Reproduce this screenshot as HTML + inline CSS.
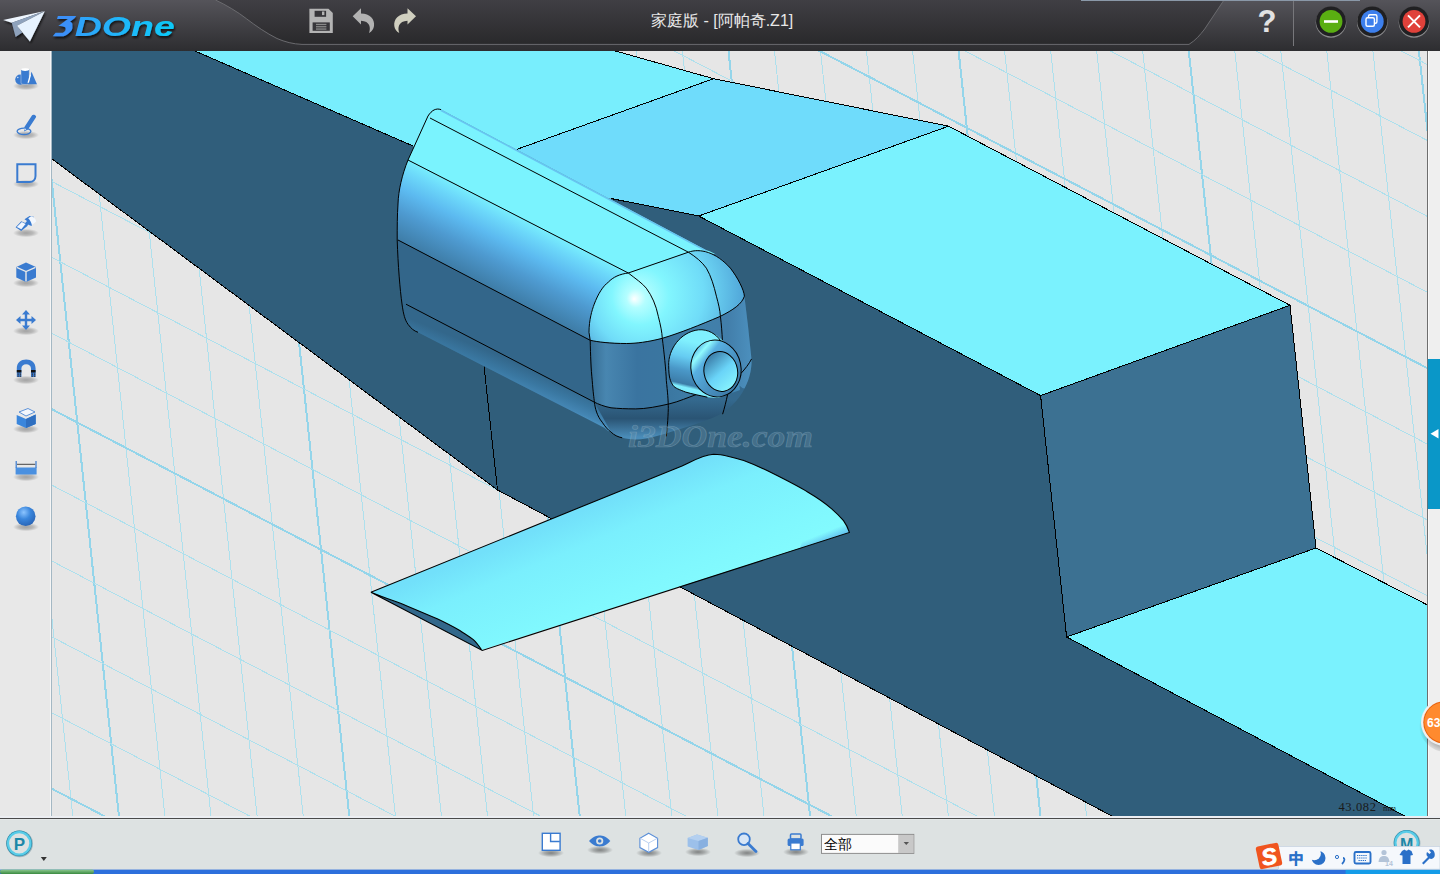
<!DOCTYPE html>
<html><head><meta charset="utf-8">
<style>
*{margin:0;padding:0;box-sizing:border-box}
html,body{width:1440px;height:874px;overflow:hidden;background:#e6e6e6;font-family:"Liberation Sans",sans-serif}
#scene{position:absolute;left:0;top:0;width:1440px;height:874px}
#title{position:absolute;left:0;top:0;width:1440px;height:51px}
#left{position:absolute;left:0;top:51px;width:52px;height:767px;background:#e8e8e8;border-right:1px solid #a4b8c4;box-shadow:inset -1px 0 0 #f6f6f6}
#rightstrip{position:absolute;left:1427px;top:51px;width:13px;height:766px;background:#efefef;border-left:1px solid #6e6e6e;box-shadow:inset 1px 0 0 #fafafa}
#bottom{position:absolute;left:0;top:816px;width:1440px;height:54px;background:#dde2e2;border-top:2px solid #eceef2}
#taskbar{position:absolute;left:0;top:870px;width:1440px;height:4px;background:#2f6fd8}
.ttl{position:absolute;left:651px;top:11px;font-size:16px;color:#e8e8e8;letter-spacing:0px}
</style></head><body>
<svg id="scene" width="1440" height="874" viewBox="0 0 1440 874">
  <rect x="52" y="51" width="1375" height="765" fill="#e6e6e6"/>
  <g id="grid" fill="none" shape-rendering="crispEdges"><line x1="-54.1" y1="51" x2="26.8" y2="817" stroke="#ade0ed" stroke-width="1"/><line x1="-8.0" y1="51" x2="72.9" y2="817" stroke="#ade0ed" stroke-width="1"/><line x1="38.0" y1="51" x2="119.0" y2="817" stroke="#94d5ea" stroke-width="2"/><line x1="84.0" y1="51" x2="165.0" y2="817" stroke="#ade0ed" stroke-width="1"/><line x1="130.1" y1="51" x2="211.1" y2="817" stroke="#ade0ed" stroke-width="1"/><line x1="176.1" y1="51" x2="257.2" y2="817" stroke="#ade0ed" stroke-width="1"/><line x1="222.1" y1="51" x2="303.3" y2="817" stroke="#ade0ed" stroke-width="1"/><line x1="268.1" y1="51" x2="349.4" y2="817" stroke="#94d5ea" stroke-width="2"/><line x1="314.2" y1="51" x2="395.5" y2="817" stroke="#ade0ed" stroke-width="1"/><line x1="360.2" y1="51" x2="441.5" y2="817" stroke="#ade0ed" stroke-width="1"/><line x1="406.2" y1="51" x2="487.6" y2="817" stroke="#ade0ed" stroke-width="1"/><line x1="452.3" y1="51" x2="533.7" y2="817" stroke="#ade0ed" stroke-width="1"/><line x1="498.3" y1="51" x2="579.8" y2="817" stroke="#94d5ea" stroke-width="2"/><line x1="544.3" y1="51" x2="625.9" y2="817" stroke="#ade0ed" stroke-width="1"/><line x1="590.4" y1="51" x2="671.9" y2="817" stroke="#ade0ed" stroke-width="1"/><line x1="636.4" y1="51" x2="718.0" y2="817" stroke="#ade0ed" stroke-width="1"/><line x1="682.4" y1="51" x2="764.1" y2="817" stroke="#ade0ed" stroke-width="1"/><line x1="728.5" y1="51" x2="810.2" y2="817" stroke="#94d5ea" stroke-width="2"/><line x1="774.5" y1="51" x2="856.3" y2="817" stroke="#ade0ed" stroke-width="1"/><line x1="820.5" y1="51" x2="902.3" y2="817" stroke="#ade0ed" stroke-width="1"/><line x1="866.5" y1="51" x2="948.4" y2="817" stroke="#ade0ed" stroke-width="1"/><line x1="912.6" y1="51" x2="994.5" y2="817" stroke="#ade0ed" stroke-width="1"/><line x1="958.6" y1="51" x2="1040.6" y2="817" stroke="#94d5ea" stroke-width="2"/><line x1="1004.6" y1="51" x2="1086.7" y2="817" stroke="#ade0ed" stroke-width="1"/><line x1="1050.7" y1="51" x2="1132.7" y2="817" stroke="#ade0ed" stroke-width="1"/><line x1="1096.7" y1="51" x2="1178.8" y2="817" stroke="#ade0ed" stroke-width="1"/><line x1="1142.7" y1="51" x2="1224.9" y2="817" stroke="#ade0ed" stroke-width="1"/><line x1="1188.8" y1="51" x2="1271.0" y2="817" stroke="#94d5ea" stroke-width="2"/><line x1="1234.8" y1="51" x2="1317.1" y2="817" stroke="#ade0ed" stroke-width="1"/><line x1="1280.8" y1="51" x2="1363.2" y2="817" stroke="#ade0ed" stroke-width="1"/><line x1="1326.8" y1="51" x2="1409.2" y2="817" stroke="#ade0ed" stroke-width="1"/><line x1="1372.9" y1="51" x2="1455.3" y2="817" stroke="#ade0ed" stroke-width="1"/><line x1="1418.9" y1="51" x2="1501.4" y2="817" stroke="#94d5ea" stroke-width="2"/><line x1="1464.9" y1="51" x2="1547.5" y2="817" stroke="#ade0ed" stroke-width="1"/><line x1="52" y1="-729.2" x2="1427" y2="-11.5" stroke="#94d5ea" stroke-width="2"/><line x1="52" y1="-653.3" x2="1427" y2="64.4" stroke="#ade0ed" stroke-width="1"/><line x1="52" y1="-577.4" x2="1427" y2="140.3" stroke="#ade0ed" stroke-width="1"/><line x1="52" y1="-501.5" x2="1427" y2="216.2" stroke="#ade0ed" stroke-width="1"/><line x1="52" y1="-425.6" x2="1427" y2="292.1" stroke="#ade0ed" stroke-width="1"/><line x1="52" y1="-349.7" x2="1427" y2="368.0" stroke="#94d5ea" stroke-width="2"/><line x1="52" y1="-273.8" x2="1427" y2="443.9" stroke="#ade0ed" stroke-width="1"/><line x1="52" y1="-197.9" x2="1427" y2="519.8" stroke="#ade0ed" stroke-width="1"/><line x1="52" y1="-122.0" x2="1427" y2="595.7" stroke="#ade0ed" stroke-width="1"/><line x1="52" y1="-46.1" x2="1427" y2="671.6" stroke="#ade0ed" stroke-width="1"/><line x1="52" y1="29.8" x2="1427" y2="747.5" stroke="#94d5ea" stroke-width="2"/><line x1="52" y1="105.7" x2="1427" y2="823.4" stroke="#ade0ed" stroke-width="1"/><line x1="52" y1="181.6" x2="1427" y2="899.3" stroke="#ade0ed" stroke-width="1"/><line x1="52" y1="257.5" x2="1427" y2="975.2" stroke="#ade0ed" stroke-width="1"/><line x1="52" y1="333.4" x2="1427" y2="1051.1" stroke="#ade0ed" stroke-width="1"/><line x1="52" y1="409.3" x2="1427" y2="1127.0" stroke="#94d5ea" stroke-width="2"/><line x1="52" y1="485.2" x2="1427" y2="1202.9" stroke="#ade0ed" stroke-width="1"/><line x1="52" y1="561.1" x2="1427" y2="1278.8" stroke="#ade0ed" stroke-width="1"/><line x1="52" y1="637.0" x2="1427" y2="1354.8" stroke="#ade0ed" stroke-width="1"/><line x1="52" y1="712.9" x2="1427" y2="1430.7" stroke="#ade0ed" stroke-width="1"/><line x1="52" y1="788.8" x2="1427" y2="1506.5" stroke="#94d5ea" stroke-width="2"/><line x1="52" y1="864.7" x2="1427" y2="1582.4" stroke="#ade0ed" stroke-width="1"/></g>
  <!-- dark side face -->
  <polygon fill="#305e7b" points="52,51 195,51 413,146 470,175 611,198.5 698.7,216 1040.6,395.6 1066.6,637 1406.7,817 1113.7,817 497.5,490 52,159"/>
  <!-- top face left -->
  <polygon fill="#78eefd" points="195,51 615.5,51 713.6,78.7 516.7,149.4 460,175 413,146"/>
  <!-- ramp -->
  <polygon fill="#6fdcfb" points="516.7,149.4 713.6,78.7 948.6,126.2 698.7,216 611,198.5 470,175"/>
  <!-- raised top -->
  <polygon fill="#7af2fe" points="698.7,216 948.6,126.2 1290,305.3 1040.6,395.6"/>
  <!-- front face -->
  <polygon fill="#3c7192" points="1040.6,395.6 1290,305.3 1316,548 1066.6,637"/>
  <!-- lower top -->
  <polygon fill="#7af2fe" points="1066.6,637 1316,548 1427.5,605 1427.5,817 1406.7,817"/>
  <g stroke="#000" stroke-width="1" fill="none" shape-rendering="crispEdges">
    <polyline points="195,51 413,146"/>
    <polyline points="615.5,51 713.6,78.7 948.6,126.2 1290,305.3 1316,548 1427.5,605"/>
    <polyline points="516.7,149.4 713.6,78.7"/>
    <polyline points="698.7,216 948.6,126.2"/>
    <polyline points="611,198.5 698.7,216 1040.6,395.6 1290,305.3"/>
    <polyline points="1040.6,395.6 1066.6,637 1316,548"/>
    <polyline points="1066.6,637 1406.7,817"/>
    <polyline points="52,159 497.5,490 1113.7,817"/>
    <polyline points="484,366 497.5,490"/>
  </g>
  <!-- wing -->
  <g id="wing">
    <defs>
      <linearGradient id="wg" gradientUnits="userSpaceOnUse" x1="560" y1="520" x2="610" y2="640">
        <stop offset="0" stop-color="#72e0fa"/><stop offset="0.25" stop-color="#7aeffd"/><stop offset="0.7" stop-color="#80f8fe"/><stop offset="1" stop-color="#84fcfe"/>
      </linearGradient>
      <linearGradient id="wtip" gradientUnits="userSpaceOnUse" x1="835" y1="528" x2="842" y2="545">
        <stop offset="0" stop-color="#56acec" stop-opacity="0"/><stop offset="0.65" stop-color="#56acec" stop-opacity="0.95"/><stop offset="1" stop-color="#56acec" stop-opacity="0"/>
      </linearGradient>
    </defs>
    <path fill="url(#wg)" d="M370.9,592.2 L682,465.9 C692,461.5 702,455 713.6,454.2 L720.7,454.7 C728,456 735,458 743.1,460.3 C753,464 763,468.5 772.6,473.3 C785,479.5 797,485.5 808,492.2 C817,497.5 825,503 831.7,508.8 C836,512.5 840,516.5 843.5,520.6 C846,524 848,528 849.4,532.4 L481.8,650 Z"/>
    <path fill="url(#wtip)" d="M849.4,532.4 L800,548 L805,533 L843.5,520.6 Z"/>
    <path fill="#33688b" d="M370.9,592.2 C380,596 390,599.5 401.1,603.5 C413,608.5 425,613.5 437.2,618.8 C445,622.5 452,626 459.8,630.5 C465,634 469,636.5 473.3,639.6 C476.5,642.5 479,646 481.4,649.5 L482.3,650.4 Z"/>
    <path fill="none" stroke="#000" stroke-width="1.1" d="M370.9,592.2 L682,465.9 C692,461.5 702,455 713.6,454.2 L720.7,454.7 C728,456 735,458 743.1,460.3 C753,464 763,468.5 772.6,473.3 C785,479.5 797,485.5 808,492.2 C817,497.5 825,503 831.7,508.8 C836,512.5 840,516.5 843.5,520.6 C846,524 848,528 849.4,532.4 L482.3,650.4 L370.9,592.2 C380,596 390,599.5 401.1,603.5 C413,608.5 425,613.5 437.2,618.8 C445,622.5 452,626 459.8,630.5 C465,634 469,636.5 473.3,639.6 C476.5,642.5 479,646 481.4,649.5"/>
  </g>
  <!-- nacelle -->
  <g id="nacelle">
    <defs>
      <clipPath id="nclip"><path id="nsil" d="M438,108.8 C433,109 430,112 428,116 L408,160 C402,175 398.5,190 398,204 C397.2,215 397.2,228 397.2,240 C398,265 400,290 402,304 C403.5,315 405,320 408,324.3 C411,328.5 414,331 418,332.3 L604.4,427.8 C608,431 615,436 622.2,437.8 C630,439.8 638,440 646.3,438.5 C665,434 680,429 694.4,424.4 C708,420 718,416 726.4,410.4 C734,404 739,398 742.4,392.4 C748.5,382 751.6,372 751.6,360.3 L748,326 L744.4,296.2 C744,292 743.5,290 742.4,288.2 C738,280 735,274 730.4,268.2 C722,258 716,253 706.4,250.2 L441,109.6 Z"/></clipPath>
      <linearGradient id="nb3" gradientUnits="userSpaceOnUse" x1="500" y1="207" x2="465" y2="275">
        <stop offset="0" stop-color="#78eefd"/><stop offset="0.15" stop-color="#6cd8fa"/><stop offset="0.38" stop-color="#5cbaf0"/><stop offset="0.65" stop-color="#4e9ad0"/><stop offset="1" stop-color="#3e7ca6"/>
      </linearGradient>
      <linearGradient id="nb5" gradientUnits="userSpaceOnUse" x1="500" y1="356" x2="490" y2="380">
        <stop offset="0" stop-color="#33678b"/><stop offset="0.5" stop-color="#3a78a2"/><stop offset="0.85" stop-color="#4486b4"/><stop offset="1" stop-color="#4c94c2"/>
      </linearGradient>
      <linearGradient id="nb1" gradientUnits="userSpaceOnUse" x1="560" y1="171" x2="556" y2="180">
        <stop offset="0" stop-color="#62b8ec"/><stop offset="1" stop-color="#7af3fe"/>
      </linearGradient>
      <radialGradient id="nhl" gradientUnits="userSpaceOnUse" cx="655" cy="290" r="95" fx="634" fy="299">
        <stop offset="0" stop-color="#ffffff"/><stop offset="0.1" stop-color="#b4feff"/><stop offset="0.3" stop-color="#82f6fe"/><stop offset="0.6" stop-color="#70dcf8"/><stop offset="1" stop-color="#4c9ed4"/>
      </radialGradient>
      <radialGradient id="nhl2" gradientUnits="userSpaceOnUse" cx="700" cy="285" r="60">
        <stop offset="0" stop-color="#84f6fe"/><stop offset="0.6" stop-color="#70dcf8"/><stop offset="1" stop-color="#56acdc"/>
      </radialGradient>
      <linearGradient id="nfront" gradientUnits="userSpaceOnUse" x1="588" y1="0" x2="752" y2="0">
        <stop offset="0" stop-color="#34698e"/><stop offset="0.11" stop-color="#4886b0"/><stop offset="0.3" stop-color="#3a74a0"/><stop offset="0.47" stop-color="#3a76a0"/><stop offset="0.7" stop-color="#4080aa"/><stop offset="0.85" stop-color="#427eaa"/><stop offset="1" stop-color="#4c90be"/>
      </linearGradient>
      <linearGradient id="nbot" gradientUnits="userSpaceOnUse" x1="0" y1="400" x2="0" y2="437">
        <stop offset="0" stop-color="#34698e"/><stop offset="0.5" stop-color="#2a5474"/><stop offset="1" stop-color="#4a8cb8"/>
      </linearGradient>
      <linearGradient id="ncyl" gradientUnits="userSpaceOnUse" x1="684" y1="340" x2="672" y2="392">
        <stop offset="0" stop-color="#80f0fe"/><stop offset="0.3" stop-color="#66ccf2"/><stop offset="0.55" stop-color="#4a98c8"/><stop offset="0.8" stop-color="#3c7ca8"/><stop offset="0.86" stop-color="#80eefe"/><stop offset="1" stop-color="#7ae8fc"/>
      </linearGradient>
      <linearGradient id="nring" gradientUnits="userSpaceOnUse" x1="698" y1="346" x2="736" y2="394">
        <stop offset="0" stop-color="#5ab4e6"/><stop offset="0.12" stop-color="#90fafe"/><stop offset="0.25" stop-color="#58b0e2"/><stop offset="0.6" stop-color="#4890c0"/><stop offset="1" stop-color="#3a74a0"/>
      </linearGradient>
      <linearGradient id="nhole" gradientUnits="userSpaceOnUse" x1="710" y1="355" x2="732" y2="390">
        <stop offset="0" stop-color="#3a7aa6"/><stop offset="0.5" stop-color="#6ad4f8"/><stop offset="1" stop-color="#8af6fe"/>
      </linearGradient>
    </defs>
    <g clip-path="url(#nclip)">
      <rect x="390" y="100" width="370" height="350" fill="url(#nbot)"/>
      <polygon fill="#7af3fe" points="380,40 800,260 688.4,252.2 628.3,273 408,160 380,145"/>
      <path d="M441,109.6 L706.4,250.2" stroke="#62b4ec" stroke-width="3" stroke-opacity="0.75" fill="none"/>
      <polygon fill="url(#nb3)" points="408,160 628.3,273 590.2,340.3 398,240 370,225 370,140"/>
      <polygon fill="#33668a" points="398,240 590.2,340.3 594.4,402.2 406,304.2 370,290 370,225"/>
      <polygon fill="url(#nb5)" points="406,304.2 594.4,402.2 611.1,432.2 612,450 370,345 370,290"/>
      <path fill="url(#nfront)" d="M590.2,340.3 C598,342 610,343.5 626.3,343.5 C636,343.5 648,342 662.3,338.3 C680,333 700,325 720.4,316.3 C733,310 742,304 744.4,296.2 L760,296 L760,392 L742.4,388 C738,384 734,383 730.4,382.3 C720,386 708,391 696.3,394.5 C688,397.5 679,401.5 670,403.7 C658,406.5 646,408.9 635.8,408.9 C626,408.9 618,408.5 611,407.8 C604,406.5 598,404 594.4,402.2 Z"/>
      <path fill="url(#nhl)" d="M628.3,273 L688.4,252.2 C700,248 716,252 730.4,268.2 C738,278 744,290 744.4,296.2 C742,304 733,310 720.4,316.3 C700,325 680,333 662.3,338.3 C648,342 636,343.5 626.3,343.5 C610,343 598,342 590.2,340.3 L589,332.3 C589,318 592,308 594.2,304.2 C598,294 603,286 608.3,282.2 C615,277 622,274 628.3,273 Z"/>
    </g>
    <g fill="none" stroke="#000" stroke-width="1">
      <path d="M441,109.6 C436,108 432,110 428,116 L408,160 C402,175 398.5,190 398,204 C397.2,215 397.2,228 397.2,240 C398,265 400,290 402,304 C403.5,315 405,320 408,324.3 C411,328.5 414,331 418,332.3"/>
      <path d="M430,118 L688.4,252.2"/>
      <path d="M408,160 L628.3,273"/>
      <path d="M398,240 L590.2,340.3"/>
      <path d="M406,304.2 L594.4,402.2"/>
      <path d="M628.3,273 L688.4,252.2"/>
      <path d="M688.4,252.2 C700,248 716,252 730.4,268.2 C738,278 744,290 744.4,296.2"/>
      <path d="M590.2,340.3 C598,342 610,343.5 626.3,343.5 C636,343.5 648,342 662.3,338.3 C680,333 700,325 720.4,316.3 C733,310 742,304 744.4,296.2"/>
      <path d="M594.4,402.2 C598,404 604,406.5 611,407.8 C618,408.5 626,408.9 635.8,408.9 C646,408.9 658,406.5 670,403.7 C679,401.5 688,397.5 696.3,394.5 C708,391 720,386 727.9,382.6 C733,380 737,377 741,373.4 C745,369 749,364 751.6,358.9"/>
      <path d="M628.3,273 C620,274 613,277 608.3,282.2 C603,286 598,294 594.2,304.2 C592,310 589,320 589,332.3 L590.2,340.3 C590.5,355 591,370 592.2,380.3 C593,392 594,398 594.4,402.2 C595,408 597,416 602.2,422.2 C605,426.5 608,430 611.1,432.2 C614,435 618,437 622.2,437.8"/>
      <path d="M628.3,273 C636,279 642,283 646.3,288.2 C652,296 656,305 658.3,316.3 C660.5,325 662,332 662.3,338.3 C664,352 666,370 666.3,380.3 C667.5,392 668.3,400 668.3,408.4 C668,420 667,430 666.3,436.4"/>
      <path d="M688.4,252.2 C696,257 702,262 706.4,268.2 C711,276 714,286 716.4,296.2 C718.5,304 720,310 720.4,316.3 C721.5,325 722,333 722.4,340.3"/>
      <path d="M727.9,393.2 C726,402 724.5,408 722.6,414.2"/>
    </g>
    <!-- nozzle -->
    <path fill="url(#ncyl)" d="M668.7,365.5 C668,350 680,332 698.5,329.8 C708,329 716,334 722,340 L735,352 L740,390 L718,398 L707.4,397.2 C700,395.5 692,394 685.7,392.1 C679,389.5 675,388 673.4,385.9 C670,381 668.8,377.7 668.7,365.5 Z"/>
    <ellipse cx="716" cy="368.5" rx="25" ry="28.5" transform="rotate(-12 716 368.5)" fill="url(#nring)"/>
    <ellipse cx="720.8" cy="371.5" rx="16.8" ry="20" transform="rotate(-10 720.8 371.5)" fill="url(#nhole)"/>
    <g fill="none" stroke="#000" stroke-width="1">
      <path d="M707.4,397.2 C700,395.5 692,394 685.7,392.1 C679,389.5 675,388 673.4,385.9 C670,381 668.8,377.7 668.7,365.5 C668,350 680,332 698.5,329.8 C708,329 716,334 720.5,340.5"/>
      <ellipse cx="716" cy="368.5" rx="25" ry="28.5" transform="rotate(-12 716 368.5)"/>
      <ellipse cx="720.8" cy="371.5" rx="16.8" ry="20" transform="rotate(-10 720.8 371.5)"/>
    </g>
  </g>
  <text x="628" y="446.5" font-family="Liberation Serif" font-weight="bold" font-style="italic" font-size="31" textLength="185" lengthAdjust="spacingAndGlyphs" fill="#7096ae" fill-opacity="0.32" stroke="#a0c0d4" stroke-opacity="0.35" stroke-width="0.7">i3DOne.com</text>
  <text x="1338.4" y="811" font-family="Liberation Serif" font-size="12.5" fill="#1a1a1a" textLength="37.5" lengthAdjust="spacing">43.082</text><text x="1383" y="811" font-family="Liberation Serif" font-size="9" fill="#1a1a1a" textLength="13" lengthAdjust="spacingAndGlyphs">mm</text>
</svg>

<div id="left"></div>
<svg style="position:absolute;left:0;top:51px" width="52" height="520" viewBox="0 51 52 520">
  <defs>
    <radialGradient id="shd" cx="0.5" cy="0.5" r="0.5"><stop offset="0" stop-color="#000" stop-opacity="0.3"/><stop offset="0.55" stop-color="#000" stop-opacity="0.2"/><stop offset="1" stop-color="#000" stop-opacity="0"/></radialGradient>
    <radialGradient id="sph" cx="0.4" cy="0.3" r="0.7"><stop offset="0" stop-color="#8cc4ff"/><stop offset="0.5" stop-color="#3a86dc"/><stop offset="1" stop-color="#2a66b8"/></radialGradient>
  </defs>
  <g fill="url(#shd)">
    <ellipse cx="26" cy="86" rx="13" ry="4.2"/>
    <ellipse cx="26" cy="135" rx="13" ry="4.2"/>
    <ellipse cx="26" cy="184" rx="13" ry="4.2"/>
    <ellipse cx="26" cy="233" rx="13" ry="4.2"/>
    <ellipse cx="26" cy="283" rx="13" ry="4.2"/>
    <ellipse cx="26" cy="331" rx="13" ry="4.2"/>
    <ellipse cx="26" cy="380" rx="13" ry="4.2"/>
    <ellipse cx="26" cy="429" rx="13" ry="4.2"/>
    <ellipse cx="26" cy="477" rx="13" ry="4.2"/>
    <ellipse cx="26" cy="527" rx="13" ry="4.2"/>
  </g>
  <g fill="#3a7bd0">
    <!-- primitives -->
    <circle cx="20.3" cy="79.6" r="5.1"/>
    <circle cx="17.8" cy="77.5" r="0.7" fill="#fff" opacity="0.8"/>
    <path d="M21,69.5 H29.3 V83 C29.3,84 27,84.5 25.15,84.5 C23.3,84.5 21,84 21,83 Z" stroke="#e8e8e8" stroke-width="0.4"/>
    <ellipse cx="25.15" cy="69.6" rx="4" ry="1.3" fill="#ffffff"/>
    <polygon points="31.5,71.8 37,84.2 28,84.2"/>
    <path d="M30.2,73.5 L27.5,82.8 L28.9,82.8 L30.9,75.5 Z" fill="#fff"/>
    <!-- sketch -->
    <ellipse cx="24" cy="131.3" rx="6.9" ry="3.2" fill="none" stroke="#3a7bd0" stroke-width="1.3"/>
    <path d="M24,131.5 L24.4,127 L32.1,115.3 C33,114.3 35,114.8 35.9,116 C36.3,116.6 36.1,117.2 35.7,117.7 L28,129.4 Z"/>
    <path d="M24.3,130.6 L24.6,128.2 L26.4,129.2 Z" fill="#e8f0fa"/>
    <!-- fillet square -->
    <path d="M17.3,164.3 H35.5 V176 C35.5,179.5 33,182 29.5,182 H17.3 Z" fill="none" stroke="#3a7bd0" stroke-width="2"/>
    <!-- eraser-ish -->
    <path d="M15.6,227.3 L21.3,221.2 L25.2,223 L27,221 L24.5,219.3 L29.5,216 L33.8,216.8 L31.6,226 C30,225.5 29,225 28,224.5 L27.4,226 L21.2,231 Z" fill="#3a7bd0"/>
    <path d="M16.8,227 L21.8,221.9 L25.6,223.9 L21.3,229.3 Z" fill="#f2f7fe"/>
    <path d="M28.2,218.3 L31.2,216.3 C33.6,216.8 35.6,218.6 36.2,221.6 L31.9,225 C31,222 29.8,219.8 28.2,218.3 Z" fill="#f2f7fe"/>
    <!-- cube -->
    <polygon points="26,262.5 36,267 36,277.5 26,282 16.3,277.5 16.3,267"/>
    <path d="M16.8,267.4 L26,271.6 L35.5,267.4 M26,271.6 V281.5" stroke="#e8e8e8" stroke-width="1.4" fill="none"/>
    <!-- move -->
    <path d="M26,310 L30,314.5 H27.2 V318.8 H31.5 V316 L36,320 L31.5,324 V321.2 H27.2 V325.5 H30 L26,330 L22,325.5 H24.8 V321.2 H20.5 V324 L16,320 L20.5,316 V318.8 H24.8 V314.5 H22 Z"/>
    <!-- magnet -->
    <path d="M16.8,377 V368.5 C16.8,362.5 21,359.5 26.2,359.5 C31.4,359.5 35.6,362.5 35.6,368.5 V377 H31 V368.5 C31,366 29,364.3 26.2,364.3 C23.4,364.3 21.4,366 21.4,368.5 V377 Z"/>
    <rect x="16.8" y="370" width="4.6" height="2.5" fill="#111"/>
    <rect x="31" y="370" width="4.6" height="2.5" fill="#111"/>
    <path d="M17.5,373.5 h1.3 v1.2 h-1.3z M19.8,373.5 h1.3 v1.2 h-1.3z M17.5,375.6 h1.3 v1.2 h-1.3z M19.8,375.6 h1.3 v1.2 h-1.3z M31.7,373.5 h1.3 v1.2 h-1.3z M34,373.5 h1.3 v1.2 h-1.3z M31.7,375.6 h1.3 v1.2 h-1.3z M34,375.6 h1.3 v1.2 h-1.3z" fill="#333"/>
    <!-- box with lid -->
    <polygon points="16.7,415 26,419 35.7,414.5 35.7,424 26,428 16.7,424" fill="#3a86dc"/>
    <polygon points="26,419 35.7,414.5 35.7,424 26,428" fill="#2f6fc0"/>
    <polygon points="19,412 28,408.5 35,412 26,416" fill="#f2f6fc" stroke="#3a7bd0" stroke-width="0.8"/>
    <!-- ruler -->
    <rect x="15.6" y="467.5" width="21" height="7" fill="#4a90e0"/>
    <rect x="15.6" y="461" width="1.2" height="7"/>
    <rect x="35.4" y="461" width="1.2" height="7"/>
    <path d="M17,464.3 H35.2" stroke="#333" stroke-width="0.9"/>
    <!-- sphere -->
    <circle cx="25.7" cy="516.3" r="9.8" fill="url(#sph)"/>
  </g>
</svg>
<div id="rightstrip"></div>
<div id="bottom"></div>
<div id="taskbar"></div>
<svg style="position:absolute;left:0;top:816px" width="1440" height="58" viewBox="0 816 1440 58">
  <defs>
    <radialGradient id="shd2" cx="0.5" cy="0.5" r="0.5"><stop offset="0" stop-color="#000" stop-opacity="0.42"/><stop offset="0.5" stop-color="#000" stop-opacity="0.25"/><stop offset="1" stop-color="#000" stop-opacity="0"/></radialGradient>
    <linearGradient id="tbg" x1="0" y1="0" x2="0" y2="1"><stop offset="0" stop-color="#8cc890"/><stop offset="1" stop-color="#3a8a40"/></linearGradient>
  </defs>
  <rect x="0" y="816" width="1440" height="2" fill="#eceef2"/><rect x="0" y="818" width="1440" height="1" fill="#4a4a4a"/><rect x="0" y="819" width="1440" height="1" fill="#e4e8e8"/>
  <!-- P button -->
  <circle cx="19.6" cy="843.8" r="13.4" fill="#7a9aa6" opacity="0.6"/>
  <circle cx="19.2" cy="843.3" r="12.9" fill="#2a8aa8"/>
  <circle cx="19.2" cy="843.3" r="11.2" fill="#dde2e2" stroke="#58cce8" stroke-width="2.2"/>
  <text x="19.3" y="850" text-anchor="middle" font-family="Liberation Sans" font-weight="bold" font-size="17" fill="#1c88a8">P</text>
  <polygon points="40.8,857 46.8,857 43.8,861" fill="#333"/>
  <g fill="url(#shd2)">
    <ellipse cx="551" cy="853" rx="13" ry="4.2"/>
    <ellipse cx="600" cy="850" rx="13" ry="4.2"/>
    <ellipse cx="649" cy="853" rx="13" ry="4.2"/>
    <ellipse cx="698" cy="852" rx="13" ry="4.2"/>
    <ellipse cx="747" cy="853" rx="13" ry="4.2"/>
    <ellipse cx="796" cy="852" rx="13" ry="4.2"/>
  </g>
  <!-- layout -->
  <rect x="542.3" y="833.3" width="17.8" height="17" fill="#fff" stroke="#3a7bd0" stroke-width="1.4"/>
  <path d="M550.6,833.5 V841.5 H559.8" fill="none" stroke="#3a7bd0" stroke-width="1.4"/>
  <!-- eye -->
  <path d="M589,841 C593,836.5 597,835.6 599.7,835.6 C602.5,835.6 606.5,836.5 610.3,841 C606.5,845.5 602.5,846.4 599.7,846.4 C597,846.4 593,845.5 589,841 Z" fill="#3a7bd0"/>
  <circle cx="599.7" cy="841" r="3.6" fill="#dde2e2"/>
  <circle cx="599.7" cy="841" r="1.8" fill="#3a7bd0"/>
  <!-- wire cube -->
  <polygon points="648.7,833.2 657.6,838.2 657.6,847.6 648.7,852.3 639.9,847.6 639.9,838.2" fill="#fff" stroke="#5a8fd8" stroke-width="1.1"/>
  <path d="M648.7,843 L640,838.2 M648.7,843 L657.5,838.2 M648.7,843 V852" stroke="#a8c4ec" stroke-width="0.8" fill="none"/>
  <!-- solid cube -->
  <polygon points="687.6,838 697,834.6 707.8,837.8 707.8,846 698.5,850 687.6,846.5" fill="#9cc0ea"/>
  <polygon points="687.6,838 697,834.6 707.8,837.8 698.5,841" fill="#b4d0f0"/>
  <polygon points="698.5,841 707.8,837.8 707.8,846 698.5,850" fill="#88b0e0"/>
  <!-- zoom -->
  <circle cx="744" cy="839.3" r="5.8" fill="#d8e6f6" stroke="#3a7bd0" stroke-width="1.8"/>
  <path d="M748,843.5 L756,851.5" stroke="#3a7bd0" stroke-width="2.8" stroke-linecap="round"/>
  <!-- printer -->
  <rect x="790.5" y="834" width="10.5" height="5" rx="1" fill="none" stroke="#3a7bd0" stroke-width="1.5"/>
  <rect x="787.6" y="838.5" width="16" height="7.5" rx="1.5" fill="#3a7bd0"/>
  <rect x="790.8" y="843" width="9.5" height="6.8" fill="#fff" stroke="#3a7bd0" stroke-width="1.2"/>
  <!-- combo -->
  <rect x="821.5" y="834.4" width="92.3" height="19" fill="#fbfbfb" stroke="#8e8e8e" stroke-width="1"/>
  <rect x="898.2" y="835" width="15.2" height="18" fill="#c8c8c8"/>
  <polygon points="903.6,842 909,842 906.3,845" fill="#555"/>
  <text x="823.5" y="849" font-family="Liberation Sans" font-size="14" fill="#000">全部</text>
  <!-- M button -->
  <circle cx="1407" cy="843.3" r="13.4" fill="#7a9aa6" opacity="0.6"/>
  <circle cx="1406.6" cy="842.8" r="12.9" fill="#2a8aa8"/>
  <circle cx="1406.6" cy="842.8" r="11.2" fill="#dde2e2" stroke="#58cce8" stroke-width="2.2"/>
  <text x="1406.6" y="849.5" text-anchor="middle" font-family="Liberation Sans" font-weight="bold" font-size="16" fill="#1c88a8">M</text>
  <!-- taskbar -->
  <rect x="0" y="869.6" width="1440" height="4.4" fill="#2d6fdc"/>
  <rect x="0" y="869.6" width="94" height="4.4" rx="2" fill="url(#tbg)"/>
  <rect x="1345.6" y="869.6" width="94.4" height="4.4" fill="#159ce8"/>
  <!-- IME bar -->
  <rect x="1278.4" y="846.4" width="161.6" height="22.8" fill="#f5f8fc" stroke="#c8d4e2" stroke-width="0.8"/>
  <g transform="rotate(-12 1269 856)">
    <rect x="1257.5" y="844.5" width="23" height="23" rx="2.5" fill="#f0541e"/>
    <text x="1269" y="864.5" text-anchor="middle" font-family="Liberation Sans" font-weight="bold" font-style="italic" font-size="23" fill="#fff" stroke="#fff" stroke-width="0.8" transform="scale(1.0)">S</text>
  </g>
  <text x="1289" y="864" font-family="Liberation Sans" font-weight="bold" font-size="15" fill="#2a70c8" stroke="#2a70c8" stroke-width="0.35">中</text>
  <circle cx="1318.6" cy="858" r="6.9" fill="#2a70c8"/><circle cx="1314.3" cy="853.6" r="6.6" fill="#f5f8fc"/>
  <circle cx="1337" cy="857" r="1.6" fill="none" stroke="#2a70c8" stroke-width="1"/>
  <path d="M1343,858 C1345,858 1345,861 1342,864" stroke="#2a70c8" stroke-width="1.8" fill="none"/>
  <rect x="1354.5" y="852" width="16" height="11.5" rx="1.5" fill="none" stroke="#2a70c8" stroke-width="1.9"/>
  <path d="M1357,855.5 h10.5 M1357,858 h10.5 M1358.5,860.5 h7.5" stroke="#2a70c8" stroke-width="1.2" stroke-dasharray="1.3 0.8"/>
  <circle cx="1384" cy="852.5" r="2.6" fill="#b4c4d8"/>
  <path d="M1378.5,862 C1379,857.5 1381,856 1384,856 C1387,856 1389,857.5 1389.5,862 Z" fill="#b4c4d8"/>
  <text x="1385" y="866" font-family="Liberation Sans" font-weight="bold" font-size="7" fill="#b4c4d8">14</text>
  <path d="M1402,851 L1404.5,849.5 C1405.5,851 1407.5,851 1408.5,849.5 L1411.5,851 L1413,855 L1410.5,855.5 V864 H1402.5 V855.5 L1399.5,855 Z" fill="#2a70c8"/>
  <path d="M1434,851.5 C1433,849.5 1430.5,849 1429,850 L1431,852.5 L1429.5,854 L1427,852 C1426,854 1426.5,856 1428,857 L1422,863 L1423.5,864.5 L1429.5,858.5 C1431.5,859.5 1433.5,858.5 1434.5,856.5 C1435,855 1434.8,853 1434,851.5 Z" fill="#2a70c8"/>
</svg>
<svg style="position:absolute;left:1400px;top:340px" width="40" height="440" viewBox="1400 340 40 440">
  <defs>
    <radialGradient id="obsh" cx="0.5" cy="0.55" r="0.5"><stop offset="0.7" stop-color="#000" stop-opacity="0.25"/><stop offset="1" stop-color="#000" stop-opacity="0"/></radialGradient>
  </defs>
  <rect x="1427.8" y="359" width="12.2" height="150" fill="#0a97c8"/>
  <polygon points="1430.5,433.8 1438.5,429 1438.5,438.6" fill="#fff"/>
  <circle cx="1446" cy="725" r="27" fill="url(#obsh)"/>
  <circle cx="1444.5" cy="722.4" r="23.5" fill="#efefef"/>
  <circle cx="1444.5" cy="722.4" r="21.2" fill="#e8600c"/>
  <circle cx="1444.5" cy="722.4" r="20.2" fill="#ff8a2e"/>
  <text x="1427" y="727" font-family="Liberation Sans" font-weight="bold" font-size="12" fill="#fff">63</text>
</svg>

<svg id="title" width="1440" height="51" viewBox="0 0 1440 51">
  <defs>
    <linearGradient id="tg" x1="0" y1="0" x2="0" y2="1">
      <stop offset="0" stop-color="#55545a"/><stop offset="1" stop-color="#2d2d30"/>
    </linearGradient>
    <linearGradient id="tab" x1="0" y1="0" x2="0" y2="1">
      <stop offset="0" stop-color="#403f44"/><stop offset="1" stop-color="#29292b"/>
    </linearGradient>
  </defs>
  <rect width="1440" height="51" fill="url(#tg)"/>
  <path fill="url(#tab)" d="M215.5,0 C226,5 238,12 246.7,18.9 C256,26 266,33 277,38.5 C285,42 293,44 302,44.4 L1189,44.4 C1196,40 1200,35 1204.7,29 L1224,0 Z"/>
  <path fill="none" stroke="#6a6a6e" stroke-width="1" d="M215.5,0 C226,5 238,12 246.7,18.9 C256,26 266,33 277,38.5 C285,42 293,44 302,44.4 L1189,44.4 C1196,40 1200,35 1204.7,29 L1224,0"/>
    <line x1="1293.5" y1="1" x2="1293.5" y2="46" stroke="#77777b" stroke-width="1"/>
</svg>
<div class="ttl">家庭版 - [阿帕奇.Z1]</div>
<svg style="position:absolute;left:0;top:0" width="1440" height="51" viewBox="0 0 1440 51">
  <defs>
    <linearGradient id="lg3d" x1="0" y1="0" x2="1" y2="0">
      <stop offset="0" stop-color="#30a0fa"/><stop offset="0.4" stop-color="#22b4fa"/><stop offset="1" stop-color="#0ccaf8"/>
    </linearGradient>
    <filter id="tsh" x="-10%" y="-10%" width="130%" height="140%"><feGaussianBlur in="SourceAlpha" stdDeviation="1.2"/><feOffset dx="1" dy="2"/><feComponentTransfer><feFuncA type="linear" slope="0.7"/></feComponentTransfer><feMerge><feMergeNode/><feMergeNode in="SourceGraphic"/></feMerge></filter>
  </defs>
  <!-- paper plane -->
  <g filter="url(#tsh)">
    <polygon points="3.1,19.9 44.8,10.9 11.8,22.7" fill="#eef6ff"/>
    <polygon points="11.8,22.7 44.8,11 17,25.8 22.2,32.4 15.6,37" fill="#8ea2bc"/>
    <polygon points="17,25.8 44.8,11.25 29.9,41.5" fill="#e6f2fe"/>
  </g>
  <g filter="url(#tsh)">
    <path fill="#3a90f8" d="M57.9,15.9 L76.2,15.9 L74.5,18.3 L70,21.7 C71.5,22.3 72.4,23 72.4,24.5 L72.4,28.1 C72,30.5 70.5,32 69.1,33 C67.5,34.6 65.5,35.8 63.5,36.2 L52.7,36.2 L55.6,32.7 L62.6,32.7 C64,32 65.2,31 65.5,29.9 C65.8,28.8 65.6,27.8 65.2,27.3 C64,26.4 61,26.1 58.3,26.1 L68,19 L57,19 Z"/>
    <text x="74.8" y="36.2" font-family="Liberation Sans" font-weight="bold" font-style="italic" font-size="28" fill="url(#lg3d)" textLength="100" lengthAdjust="spacingAndGlyphs">DOne</text>
  </g>
  <!-- save -->
  <g fill="#b4b4b4">
    <path d="M309.4,8.8 H328.5 L332.8,13 V33 H309.4 Z"/>
    <rect x="314.6" y="10.8" width="11.5" height="6" fill="#37363a"/>
    <rect x="322" y="11.5" width="2.4" height="3.6" fill="#b4b4b4"/>
    <rect x="312.6" y="22.4" width="17.2" height="8.4" fill="#37363a"/>
    <rect x="316" y="23.8" width="10.4" height="1.3" fill="#8a8a8a"/>
    <rect x="316" y="26.1" width="10.4" height="1.3" fill="#8a8a8a"/>
    <rect x="316" y="28.4" width="10.4" height="1.3" fill="#8a8a8a"/>
  </g>
  <!-- undo -->
  <path fill="#b2b2b2" d="M352.7,16.2 L361,8.3 L361,13.4 C370,13.6 375,19 374,26 C373.5,29 372,31.5 369,33 C371,28 370,21 361,20.8 L361,24.5 Z"/>
  <!-- redo -->
  <path fill="#d0cfbf" d="M416,16.2 L407.5,8.3 L407.5,13.4 C398.5,13.6 393.5,19 394.3,26 C394.8,29 396.3,31.5 399.3,33 C397.3,28 398.5,21 407.5,20.8 L407.5,24.5 Z"/>
  <!-- help -->
  <text x="1267" y="32" text-anchor="middle" font-family="Liberation Sans" font-weight="bold" font-size="31" fill="#e2e2e2">?</text>
  <rect x="1081" y="0" width="279" height="1" fill="#8a98a8"/>
  <!-- buttons -->
  <g>
    <circle cx="1331" cy="22.4" r="15.3" fill="#8a8a8c"/>
    <circle cx="1331" cy="21.4" r="15" fill="#202022"/>
    <circle cx="1331" cy="21.4" r="11.4" fill="#5aae12"/>
    <rect x="1324" y="20.2" width="14" height="2.6" fill="#fff"/>
    <circle cx="1372.3" cy="22.4" r="15.3" fill="#8a8a8c"/>
    <circle cx="1372.3" cy="21.4" r="15" fill="#202022"/>
    <circle cx="1372.3" cy="21.4" r="11.4" fill="#3d7fec"/>
    <rect x="1368.5" y="14.8" width="8.4" height="8.4" rx="1.5" fill="none" stroke="#fff" stroke-width="1.4"/>
    <rect x="1366" y="17.8" width="8.4" height="8.4" rx="1.5" fill="#3d7fec" stroke="#fff" stroke-width="1.4"/>
    <circle cx="1414" cy="22.4" r="15.3" fill="#8a8a8c"/>
    <circle cx="1414" cy="21.4" r="15" fill="#202022"/>
    <circle cx="1414" cy="21.4" r="11.4" fill="#e0413a"/>
    <path d="M1408,15.4 L1420,27.4 M1420,15.4 L1408,27.4" stroke="#fff" stroke-width="2"/>
  </g>
</svg>
</body></html>
